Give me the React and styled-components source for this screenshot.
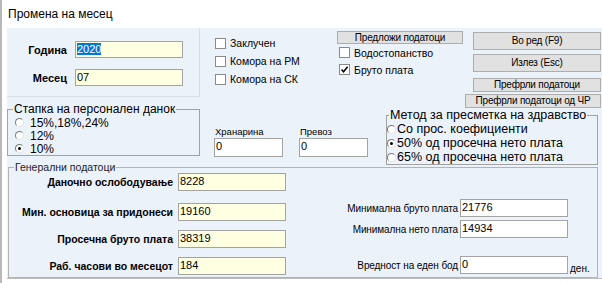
import React from "react";
import styled, { createGlobalStyle } from "styled-components";

const Global = createGlobalStyle`
  html, body { margin: 0; padding: 0; background: #fff; }
  body { font-family: "Liberation Sans", Arial, sans-serif; color: #000; }
  * { box-sizing: border-box; }
`;

const Window = styled.div`
  width: 602px;
  height: 283px;
  overflow: hidden;
  background: #fff;
  border-left: 2px solid #b9b9b9;
  display: flex;
  flex-direction: column;
`;

const TitleBar = styled.div`
  height: 28px;
  flex: none;
  padding-left: 6px;
  font-size: 12px;
  line-height: 28px;
`;

const Frame = styled.div`
  padding-left: 5px;
  flex: none;
`;

const Client = styled.div`
  width: 595px;
  height: 251px;
  background: #ecf2fa;
  border-bottom: 1px solid #bdbdbd;
  display: flex;
  flex-direction: column;
`;

const Upper = styled.div`
  display: flex;
  align-items: flex-start;
`;

const ColA = styled.div`
  width: 193px;
  flex: none;
  display: flex;
  flex-direction: column;
`;

const DatePanel = styled.div`
  height: 69px;
  border-right: 1px solid #d7dde5;
  border-bottom: 1px solid #d7dde5;
  padding-top: 13px;
  display: flex;
  flex-direction: column;
  gap: 11px;
`;

const FormRow = styled.div`
  display: grid;
  grid-template-columns: ${(p) => p.$label}px ${(p) => p.$input}px auto;
  column-gap: ${(p) => p.$gap}px;
  align-items: center;
  margin-top: ${(p) => p.$mt || 0}px;
`;

const BoldLabel = styled.div`
  text-align: right;
  font-weight: bold;
  font-size: ${(p) => p.$fs || 11}px;
  white-space: nowrap;
`;

const SideLabel = styled.div`
  text-align: right;
  font-size: 10px;
  letter-spacing: -0.1px;
  white-space: nowrap;
`;

const Unit = styled.div`
  font-size: 10px;
  padding-top: 6px;
`;

const TextBox = styled.div`
  width: ${(p) => p.$w}px;
  height: ${(p) => p.$h}px;
  background: ${(p) => (p.$yellow ? "#ffffe1" : "#ffffff")};
  border: 1px solid #a3a3a3;
  font-size: 11px;
  line-height: 13px;
  padding: 1px 1px;
  white-space: nowrap;
  overflow: hidden;
`;

const Selected = styled.span`
  background: #0078d7;
  color: #fff;
`;

const GroupBox = styled.fieldset`
  margin: ${(p) => p.$mt || 0}px 0 0 ${(p) => p.$ml || 0}px;
  padding: 0 0 ${(p) => p.$pb || 0}px 0;
  width: ${(p) => (p.$w ? `${p.$w}px` : "auto")};
  border: 1px solid ${(p) => p.$line || "#a2a2a2"};
  min-width: 0;
`;

const Legend = styled.legend`
  margin-left: ${(p) => p.$ml}px;
  padding: 0 1px;
  font-size: ${(p) => p.$fs}px;
  line-height: ${(p) => p.$lh}px;
  color: ${(p) => p.$color || "#000"};
  white-space: nowrap;
`;

const RadioRow = styled.div`
  display: flex;
  align-items: center;
  height: ${(p) => p.$h}px;
  padding-left: ${(p) => p.$pl}px;
  font-size: ${(p) => p.$fs}px;
  white-space: nowrap;
`;

const RadioDot = styled.span`
  position: relative;
  flex: none;
  width: 9px;
  height: 9px;
  border-radius: 50%;
  border: 1px solid;
  border-color: #7c7c7c #e4e4e4 #e4e4e4 #7c7c7c;
  background: #fff;
  margin-right: ${(p) => p.$mr}px;
  &::after {
    content: "";
    display: ${(p) => (p.$on ? "block" : "none")};
    position: absolute;
    left: 2px;
    top: 2px;
    width: 3px;
    height: 3px;
    border-radius: 50%;
    background: #000;
  }
`;

const ColRight = styled.div`
  flex: 1;
  display: flex;
  flex-direction: column;
`;

const TopRow = styled.div`
  display: flex;
  align-items: flex-start;
  height: 80px;
`;

const CheckCol = styled.div`
  width: ${(p) => p.$w}px;
  flex: none;
  padding-left: ${(p) => p.$pl || 0}px;
  padding-top: ${(p) => p.$pt || 0}px;
  display: flex;
  flex-direction: column;
`;

const CheckRow = styled.div`
  display: flex;
  align-items: center;
  gap: 4px;
  height: ${(p) => p.$h}px;
  padding-left: ${(p) => p.$pl || 0}px;
  font-size: 10.5px;
  white-space: nowrap;
`;

const Box = styled.span`
  flex: none;
  width: 11px;
  height: 11px;
  border: 1px solid #8a8a8a;
  background: #fff;
  display: flex;
  align-items: center;
  justify-content: center;
`;

const BtnCol = styled.div`
  width: 137px;
  margin-left: 2px;
  flex: none;
  padding-top: 4px;
  padding-right: 1px;
  display: flex;
  flex-direction: column;
  align-items: flex-end;
`;

const PushButton = styled.div`
  width: ${(p) => p.$w}px;
  height: ${(p) => p.$h}px;
  margin-top: ${(p) => p.$mt || 0}px;
  background: #e1e1e1;
  border: 1px solid #adadad;
  font-size: ${(p) => p.$fs || 10}px;
  letter-spacing: -0.2px;
  line-height: ${(p) => p.$h - 2}px;
  text-align: center;
  white-space: nowrap;
  overflow: hidden;
`;

const BottomRow = styled.div`
  display: flex;
  align-items: flex-start;
`;

const FieldCol = styled.div`
  margin-left: ${(p) => p.$ml}px;
  margin-top: 17px;
  display: flex;
  flex-direction: column;
`;

const SmallLabel = styled.div`
  font-size: 9.5px;
  line-height: 13px;
  padding-left: ${(p) => p.$pl || 0}px;
`;

const GenContent = styled.div`
  display: flex;
  align-items: flex-start;
`;

const GenCol = styled.div`
  display: flex;
  flex-direction: column;
  margin-left: ${(p) => p.$ml || 0}px;
  flex: none;
`;

function Check({ label, on, h, pl }) {
  return (
    <CheckRow $h={h} $pl={pl}>
      <Box>
        {on && (
          <svg width="9" height="9" viewBox="0 0 9 9">
            <path d="M1.5 4.5 L3.5 6.8 L7.6 1.8" fill="none" stroke="#000" strokeWidth="1.5" />
          </svg>
        )}
      </Box>
      {label}
    </CheckRow>
  );
}

function Radio({ label, on, h, pl, fs, mr }) {
  return (
    <RadioRow $h={h} $pl={pl} $fs={fs}>
      <RadioDot $on={on} $mr={mr} />
      {label}
    </RadioRow>
  );
}

const leftGeneral = [
  { label: "Даночно ослободување", value: "8228", mt: 0 },
  { label: "Мин. основица за придонеси", value: "19160", mt: 12 },
  { label: "Просечна бруто плата", value: "38319", mt: 9 },
  { label: "Раб. часови во месецот", value: "184", mt: 9 },
];

const rightGeneral = [
  { label: "Минимална бруто плата", value: "21776", mt: 26 },
  { label: "Минимална нето плата", value: "14934", mt: 3 },
  { label: "Вредност на еден бод", value: "0", mt: 18, unit: "ден." },
];

export default function App() {
  return (
    <>
      <Global />
      <Window>
        <TitleBar>Промена на месец</TitleBar>
        <Frame>
          <Client>
            <Upper>
              <ColA>
                <DatePanel>
                  <FormRow $label={60} $input={108} $gap={8}>
                    <BoldLabel>Година</BoldLabel>
                    <TextBox $w={108} $h={17} $yellow>
                      <Selected>2020</Selected>
                    </TextBox>
                  </FormRow>
                  <FormRow $label={60} $input={108} $gap={8}>
                    <BoldLabel>Месец</BoldLabel>
                    <TextBox $w={108} $h={17} $yellow>
                      07
                    </TextBox>
                  </FormRow>
                </DatePanel>
                <GroupBox $mt={5}>
                  <Legend $ml={5} $fs={12} $lh={14}>
                    Стапка на персонален данок
                  </Legend>
                  <Radio label="15%,18%,24%" h={13} pl={7} fs={12} mr={6} />
                  <Radio label="12%" h={13} pl={7} fs={12} mr={6} />
                  <Radio label="10%" on h={13} pl={7} fs={12} mr={6} />
                </GroupBox>
              </ColA>
              <ColRight>
                <TopRow>
                  <CheckCol $w={137} $pl={15} $pt={6}>
                    <Check label="Заклучен" h={18} />
                    <Check label="Комора на РМ" h={18} />
                    <Check label="Комора на СК" h={18} />
                  </CheckCol>
                  <CheckCol $w={126} $pt={3}>
                    <PushButton $w={126} $h={13} $fs={10}>
                      Предложи податоци
                    </PushButton>
                    <Check label="Водостопанство" h={17} pl={2} />
                    <Check label="Бруто плата" on h={17} pl={2} />
                  </CheckCol>
                  <BtnCol>
                    <PushButton $w={128} $h={18} $fs={10}>
                      Во ред (F9)
                    </PushButton>
                    <PushButton $w={128} $h={18} $mt={4} $fs={10}>
                      Излез (Esc)
                    </PushButton>
                    <PushButton $w={128} $h={14} $mt={6} $fs={10}>
                      Префрли податоци
                    </PushButton>
                    <PushButton $w={136} $h={14} $mt={2} $fs={10}>
                      Префрли податоци од ЧР
                    </PushButton>
                  </BtnCol>
                </TopRow>
                <BottomRow>
                  <FieldCol $ml={14}>
                    <SmallLabel $pl={1}>Хранарина</SmallLabel>
                    <TextBox $w={69} $h={19}>0</TextBox>
                  </FieldCol>
                  <FieldCol $ml={16}>
                    <SmallLabel $pl={1}>Превоз</SmallLabel>
                    <TextBox $w={69} $h={19}>0</TextBox>
                  </FieldCol>
                  <GroupBox $ml={18} $w={212}>
                    <Legend $ml={2} $fs={12.5} $lh={14}>
                      Метод за пресметка на здравство
                    </Legend>
                    <Radio label="Со прос. коефициенти" h={14} pl={0} fs={12.5} mr={1} />
                    <Radio label="50% од просечна нето плата" on h={14} pl={0} fs={12.5} mr={1} />
                    <Radio label="65% од просечна нето плата" h={14} pl={0} fs={12.5} mr={1} />
                  </GroupBox>
                </BottomRow>
              </ColRight>
            </Upper>
            <GroupBox $mt={-4} $ml={1} $w={590} $pb={2} $line="#b3b3b3">
              <Legend $ml={5} $fs={10.5} $lh={12} $color="#222">
                Генерални податоци
              </Legend>
              <GenContent>
                <GenCol>
                  {leftGeneral.map((r) => (
                    <FormRow key={r.label} $label={164} $input={108} $gap={5} $mt={r.mt}>
                      <BoldLabel $fs={10.5}>{r.label}</BoldLabel>
                      <TextBox $w={108} $h={18} $yellow>
                        {r.value}
                      </TextBox>
                    </FormRow>
                  ))}
                </GenCol>
                <GenCol $ml={14}>
                  {rightGeneral.map((r) => (
                    <FormRow key={r.label} $label={153} $input={108} $gap={2} $mt={r.mt}>
                      <SideLabel>{r.label}</SideLabel>
                      <TextBox $w={108} $h={18}>
                        {r.value}
                      </TextBox>
                      {r.unit && <Unit>{r.unit}</Unit>}
                    </FormRow>
                  ))}
                </GenCol>
              </GenContent>
            </GroupBox>
          </Client>
        </Frame>
      </Window>
    </>
  );
}
